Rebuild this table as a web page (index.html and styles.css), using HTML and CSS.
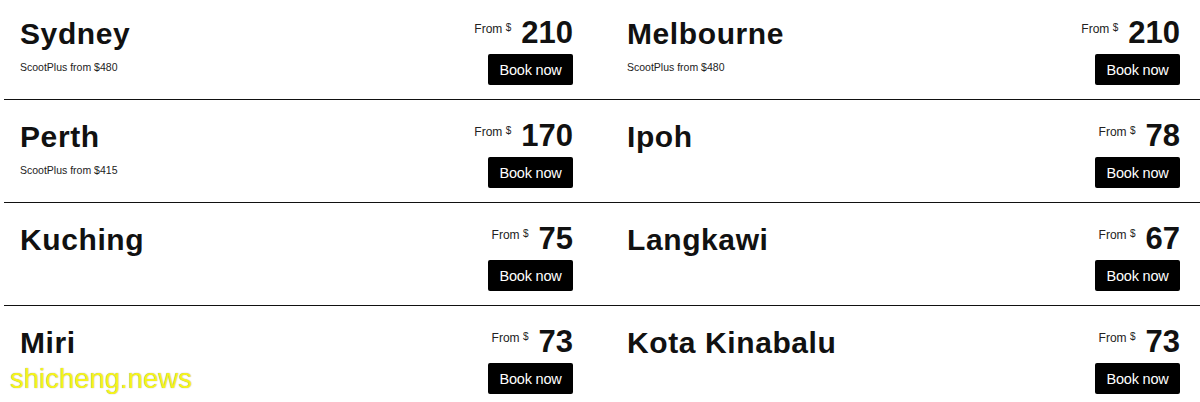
FILE: index.html
```html
<!DOCTYPE html>
<html>
<head>
<meta charset="utf-8">
<link rel="stylesheet" href="styles.css">
</head>
<body>
<div class="page">
  <div class="row">
    <div class="cell">
      <div class="dest"><div class="city">Sydney</div><div class="plus">ScootPlus from $480</div></div>
      <div class="fare"><div class="price"><span class="from">From <span class="cur">$</span></span><span class="amt">210</span></div><a class="btn">Book now</a></div>
    </div>
    <div class="cell">
      <div class="dest"><div class="city">Melbourne</div><div class="plus">ScootPlus from $480</div></div>
      <div class="fare"><div class="price"><span class="from">From <span class="cur">$</span></span><span class="amt">210</span></div><a class="btn">Book now</a></div>
    </div>
  </div>
  <div class="row">
    <div class="cell">
      <div class="dest"><div class="city">Perth</div><div class="plus">ScootPlus from $415</div></div>
      <div class="fare"><div class="price"><span class="from">From <span class="cur">$</span></span><span class="amt">170</span></div><a class="btn">Book now</a></div>
    </div>
    <div class="cell">
      <div class="dest"><div class="city">Ipoh</div></div>
      <div class="fare"><div class="price"><span class="from">From <span class="cur">$</span></span><span class="amt">78</span></div><a class="btn">Book now</a></div>
    </div>
  </div>
  <div class="row">
    <div class="cell">
      <div class="dest"><div class="city">Kuching</div></div>
      <div class="fare"><div class="price"><span class="from">From <span class="cur">$</span></span><span class="amt">75</span></div><a class="btn">Book now</a></div>
    </div>
    <div class="cell">
      <div class="dest"><div class="city">Langkawi</div></div>
      <div class="fare"><div class="price"><span class="from">From <span class="cur">$</span></span><span class="amt">67</span></div><a class="btn">Book now</a></div>
    </div>
  </div>
  <div class="row last">
    <div class="cell">
      <div class="dest"><div class="city">Miri</div></div>
      <div class="fare"><div class="price"><span class="from">From <span class="cur">$</span></span><span class="amt">73</span></div><a class="btn">Book now</a></div>
    </div>
    <div class="cell">
      <div class="dest"><div class="city">Kota Kinabalu</div></div>
      <div class="fare"><div class="price"><span class="from">From <span class="cur">$</span></span><span class="amt">73</span></div><a class="btn">Book now</a></div>
    </div>
  </div>
  <div class="watermark">shicheng.news</div>
</div>
</body>
</html>
```
FILE: styles.css
```css
* { box-sizing: border-box; }
html, body { margin: 0; padding: 0; background: #fff; }
body { font-family: "Liberation Sans", Arial, sans-serif; color: #111; overflow: hidden; }
.page { position: relative; width: 1200px; height: 402px; overflow: hidden; }
.row {
  display: grid;
  grid-template-columns: 589px 593px;
  column-gap: 14px;
  margin-left: 4px;
  height: 103px;
  border-bottom: 1px solid #111;
}
.row:first-child { margin-top: -3px; }
.row.last { border-bottom: none; }
.cell {
  display: flex;
  justify-content: space-between;
  padding: 0 20px 0 16px;
}
.cell + .cell { padding-left: 20px; }
.dest { padding-top: 18px; }
.city { font-size: 30px; font-weight: 700; line-height: 38px; letter-spacing: 0.6px; color: #111; }
.plus { font-size: 10.5px; line-height: 14px; margin-top: 7px; color: #222; }
.fare { display: flex; flex-direction: column; align-items: flex-end; padding-top: 18px; }
.price { display: flex; align-items: flex-start; height: 35px; }
.from { font-size: 12px; line-height: 14px; margin-top: 6px; margin-right: 10px; color: #222; }
.cur { font-size: 10px; vertical-align: 2px; }
.amt { font-size: 31px; font-weight: 700; line-height: 35px; }
.btn {
  display: flex; align-items: center; justify-content: center;
  width: 85px; height: 31px; margin-top: 4px;
  background: #000; color: #fff; border-radius: 2px;
  font-size: 14.5px; letter-spacing: -0.2px;
}
.watermark {
  position: absolute; left: 10px; top: 362px;
  font-family: "Liberation Sans", Arial, sans-serif;
  font-size: 27.5px; line-height: 34px; color: #f6f41a;
  text-shadow: 0 0 1px rgba(80,80,0,0.6);
}
```
